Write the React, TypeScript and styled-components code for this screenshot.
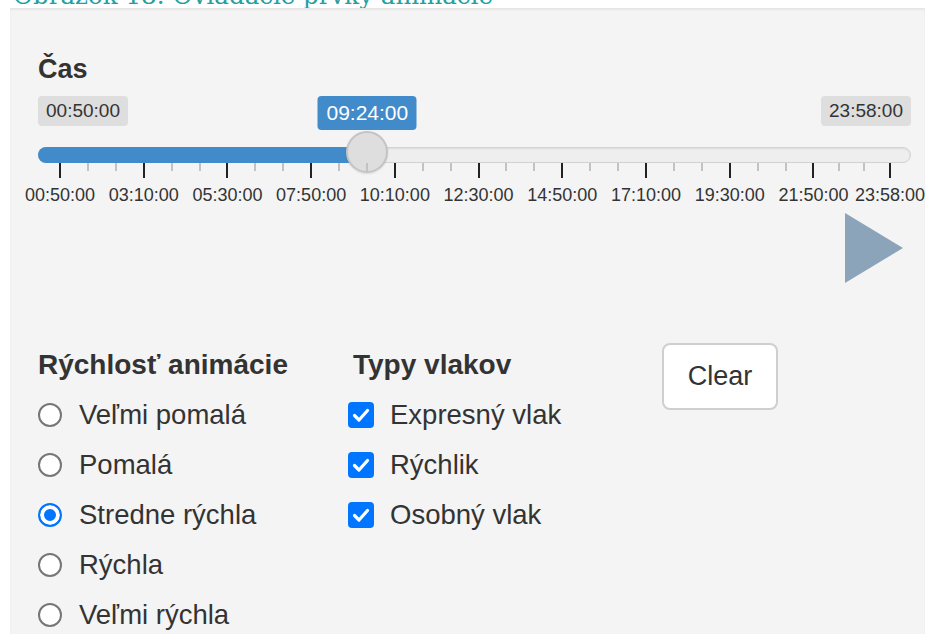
import React from "react"
import styled, { createGlobalStyle } from "styled-components"

const GlobalStyle = createGlobalStyle`
  html, body {
    margin: 0;
    padding: 0;
    background: #fff;
    overflow: hidden;
  }
  body {
    font-family: "Liberation Sans", Arial, sans-serif;
    color: #333;
  }
`

// slider range in minutes from midnight
const START = 50
const END = 23 * 60 + 58
const VALUE = 9 * 60 + 24
const STEP = 140
const RAIL_OFFSET = 22
const RAIL_WIDTH = 830

const toX = (min: number) => RAIL_OFFSET + ((min - START) / (END - START)) * RAIL_WIDTH
const pad = (n: number) => String(n).padStart(2, "0")
const fmt = (min: number) => `${pad(Math.floor(min / 60))}:${pad(min % 60)}:00`

const majors: number[] = []
for (let m = START; m < END; m += STEP) majors.push(m)
majors.push(END)

const minors: number[] = []
majors.slice(0, -1).forEach((m, i) => {
	const next = majors[i + 1]
	const part = (next - m) / 3
	minors.push(m + part, m + part * 2)
})

const speeds = ["Veľmi pomalá", "Pomalá", "Stredne rýchla", "Rýchla", "Veľmi rýchla"]
const trains = ["Expresný vlak", "Rýchlik", "Osobný vlak"]

const App: React.FC = () => {
	return (
		<>
			<GlobalStyle />
			<Caption>
				<span>Obrázok 18: Ovládacie prvky animácie</span>
			</Caption>
			<Panel>
				<FieldLabel>Čas</FieldLabel>
				<Slider>
					<EdgeTag>{fmt(START)}</EdgeTag>
					<EdgeTag $right>{fmt(END)}</EdgeTag>
					<ValueTag style={{ left: toX(VALUE) }}>{fmt(VALUE)}</ValueTag>
					<Track />
					<Fill style={{ width: toX(VALUE) }} />
					<Knob style={{ left: toX(VALUE) }} />
					{minors.map((m) => (
						<Tick key={`s${m}`} style={{ left: toX(m) }} />
					))}
					{majors.map((m) => (
						<React.Fragment key={m}>
							<Tick $major style={{ left: toX(m) }} />
							<TickText style={{ left: toX(m) }}>{fmt(m)}</TickText>
						</React.Fragment>
					))}
				</Slider>
				<PlayRow>
					<PlayButton aria-label="Play">
						<svg width="58" height="70" viewBox="0 0 58 70">
							<polygon points="0,0 58,35 0,70" fill="#8ba4ba" />
						</svg>
					</PlayButton>
				</PlayRow>
				<Options>
					<Column>
						<GroupTitle>Rýchlosť animácie</GroupTitle>
						<List>
							{speeds.map((s, i) => (
								<Choice key={s}>
									<Radio name="speed" defaultChecked={i === 2} />
									{s}
								</Choice>
							))}
						</List>
					</Column>
					<Column $shift={3}>
						<GroupTitle>Typy vlakov</GroupTitle>
						<List>
							{trains.map((t) => (
								<Choice key={t} $gap={16}>
									<CheckBox>
										<svg width="26" height="26" viewBox="0 0 26 26">
											<path
												d="M6.5 13.5 L11 18 L19.5 8.5"
												fill="none"
												stroke="#fff"
												strokeWidth="3.2"
												strokeLinecap="round"
												strokeLinejoin="round"
											/>
										</svg>
									</CheckBox>
									{t}
								</Choice>
							))}
						</List>
					</Column>
					<Column>
						<ClearButton>Clear</ClearButton>
					</Column>
				</Options>
			</Panel>
		</>
	)
}

const Caption = styled.div`
	height: 8px;
	overflow: hidden;
	padding-left: 13px;
	span {
		display: block;
		margin-top: -16px;
		font-family: "DejaVu Serif", "Liberation Serif", serif;
		font-size: 24.5px;
		line-height: 24px;
		color: #22a0a0;
		white-space: nowrap;
	}
`

const Panel = styled.section`
	margin-left: 10px;
	min-height: 640px;
	padding: 42px 0 0 28px;
	background: #f4f4f4;
	box-shadow: inset 0 2px 2px rgba(0, 0, 0, 0.06);
	overflow: hidden;
`

const FieldLabel = styled.div`
	font-size: 27px;
	line-height: 38px;
	font-weight: 700;
	margin-bottom: 8px;
`

const Slider = styled.div`
	position: relative;
	width: 873px;
	height: 110px;
`

const EdgeTag = styled.div<{ $right?: boolean }>`
	position: absolute;
	top: 0;
	${({ $right }) => ($right ? "right: 0;" : "left: 0;")}
	width: 90px;
	height: 30px;
	border-radius: 4px;
	background: #dedede;
	color: #333;
	font-size: 19px;
	line-height: 30px;
	text-align: center;
`

const ValueTag = styled.div`
	position: absolute;
	top: 0;
	transform: translateX(-50%);
	width: 99px;
	height: 34px;
	border-radius: 4px;
	background: #428bca;
	color: #fff;
	font-size: 21px;
	line-height: 34px;
	text-align: center;
`

const Track = styled.div`
	position: absolute;
	top: 51px;
	left: 0;
	right: 0;
	height: 16px;
	box-sizing: border-box;
	border-radius: 8px;
	border: 1px solid #d2d2d2;
	background: #eeeeee;
	box-shadow: inset 0 1px 2px rgba(0, 0, 0, 0.08);
`

const Fill = styled.div`
	position: absolute;
	top: 51px;
	left: 0;
	height: 16px;
	border-radius: 8px 0 0 8px;
	background: #428bca;
`

const Knob = styled.div`
	position: absolute;
	top: 35px;
	width: 42px;
	height: 42px;
	box-sizing: border-box;
	transform: translateX(-50%);
	border-radius: 50%;
	border: 2px solid #c4c4c4;
	background: #dedede;
	box-shadow: 0 1px 2px rgba(0, 0, 0, 0.1);
`

const Tick = styled.div<{ $major?: boolean }>`
	position: absolute;
	top: 67px;
	width: 2px;
	margin-left: -1px;
	height: ${({ $major }) => ($major ? "15px" : "8px")};
	background: ${({ $major }) => ($major ? "#222" : "#c2c2c2")};
`

const TickText = styled.div`
	position: absolute;
	top: 90px;
	transform: translateX(-50%);
	font-size: 18px;
	line-height: 18px;
	color: #333;
	white-space: nowrap;
`

const PlayRow = styled.div`
	display: flex;
	justify-content: flex-end;
	padding-right: 22px;
	margin-top: 7px;
`

const PlayButton = styled.button`
	display: block;
	padding: 0;
	border: 0;
	background: none;
	cursor: pointer;
	svg {
		display: block;
	}
`

const Options = styled.div`
	display: grid;
	grid-template-columns: 312px 312px 1fr;
	margin-top: 60px;
`

const Column = styled.div<{ $shift?: number }>`
	display: flex;
	flex-direction: column;
	align-items: flex-start;
	padding-left: ${({ $shift }) => $shift ?? 0}px;
`

const GroupTitle = styled.div`
	margin-top: 3px;
	font-size: 28px;
	line-height: 38px;
	font-weight: 700;
`

const List = styled.div`
	margin-top: 6px;
	display: flex;
	flex-direction: column;
`

const Choice = styled.label<{ $gap?: number }>`
	display: flex;
	align-items: center;
	gap: ${({ $gap }) => $gap ?? 17}px;
	height: 50px;
	font-size: 27.5px;
	color: #333;
	cursor: pointer;
`

const Radio = styled.input.attrs({ type: "radio" })`
	appearance: none;
	margin: 0;
	width: 24px;
	height: 24px;
	box-sizing: border-box;
	border-radius: 50%;
	border: 2px solid #767676;
	background: #fff;
	&:checked {
		border-color: #0075ff;
		background: #0075ff;
		box-shadow: inset 0 0 0 4px #fff;
	}
`

const CheckBox = styled.span`
	display: flex;
	width: 26px;
	height: 26px;
	margin-left: -5px;
	border-radius: 4px;
	background: #0075ff;
`

const ClearButton = styled.button`
	width: 116px;
	height: 67px;
	border: 2px solid #cfcfcf;
	border-radius: 8px;
	background: #fff;
	color: #333;
	font-family: "Liberation Sans", Arial, sans-serif;
	font-size: 27px;
	cursor: pointer;
`

export default App
